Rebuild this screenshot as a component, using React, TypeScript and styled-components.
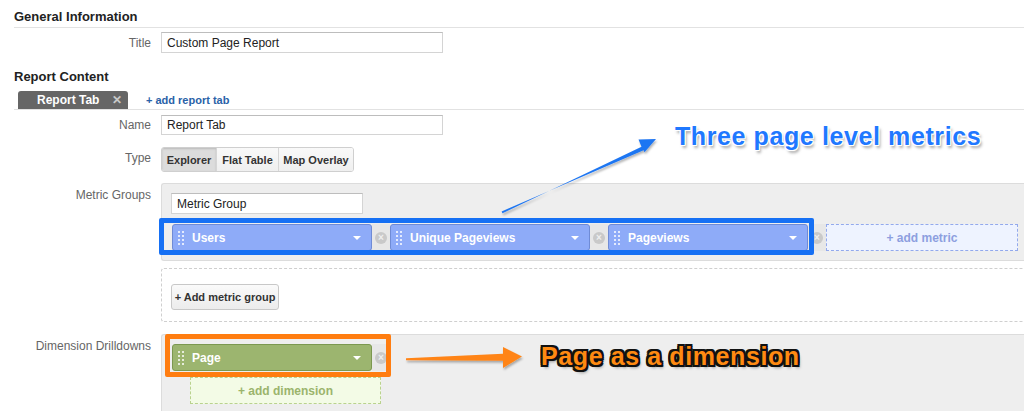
import React from 'react';
import styled, { createGlobalStyle } from 'styled-components';

const GlobalStyle = createGlobalStyle`
  html, body {
    margin: 0;
    padding: 0;
    background: #fff;
    overflow: hidden;
  }
  body {
    font-family: "Liberation Sans", Arial, sans-serif;
    color: #222;
  }
`;

const metrics = ['Users', 'Unique Pageviews', 'Pageviews'];

const Page = styled.div`
  position: relative;
  width: 1024px;
  height: 411px;
  overflow: hidden;
  padding-left: 14px;
  box-sizing: border-box;
`;

const SectionTitle = styled.h2<{ $ruled?: boolean }>`
  margin: ${(p) => (p.$ruled ? '9px' : '16px')} 0 0;
  padding-bottom: ${(p) => (p.$ruled ? '3px' : '0')};
  font-size: 13px;
  line-height: 15px;
  font-weight: bold;
  color: #222;
  border-bottom: ${(p) => (p.$ruled ? '1px solid #e2e2e2' : 'none')};
`;

const FieldRow = styled.div<{ $top: number; $center?: boolean }>`
  display: flex;
  align-items: ${(p) => (p.$center ? 'center' : 'flex-start')};
  gap: 10px;
  margin-top: ${(p) => p.$top}px;
`;

const Label = styled.div<{ $pad?: number }>`
  flex: 0 0 137px;
  text-align: right;
  font-size: 12px;
  line-height: 14px;
  color: #666;
  padding-top: ${(p) => p.$pad ?? 0}px;
`;

const TextInput = styled.div<{ $w: number; $h: number }>`
  width: ${(p) => p.$w}px;
  height: ${(p) => p.$h}px;
  box-sizing: border-box;
  border: 1px solid #d4d4d4;
  border-top-color: #bdbdbd;
  background: #fff;
  padding-left: 5px;
  display: flex;
  align-items: center;
  font-size: 12px;
  color: #222;
`;

const TabBar = styled.div`
  display: flex;
  align-items: flex-end;
  gap: 18px;
  margin-top: 7px;
  padding-left: 4px;
  border-bottom: 1px solid #e2e2e2;
`;

const Tab = styled.div`
  width: 110px;
  height: 18px;
  box-sizing: border-box;
  background: #666;
  border-radius: 3px 3px 0 0;
  color: #fff;
  font-size: 12px;
  font-weight: bold;
  display: flex;
  align-items: center;
  padding-left: 19px;
  gap: 13px;
`;

const TabClose = styled.span`
  color: #c9c9c9;
  font-size: 12px;
`;

const AddTab = styled.div`
  font-size: 11px;
  font-weight: bold;
  color: #2a62a8;
  line-height: 18px;
`;

const ButtonGroup = styled.div`
  display: flex;
  border: 1px solid #cfcfcf;
  border-radius: 3px;
  overflow: hidden;
`;

const ToggleButton = styled.div<{ $w: number; $active?: boolean }>`
  width: ${(p) => p.$w}px;
  height: 23px;
  display: flex;
  align-items: center;
  justify-content: center;
  font-size: 11px;
  font-weight: bold;
  color: #333;
  background: ${(p) => (p.$active ? '#dcdcdc' : 'linear-gradient(#f9f9f9, #efefef)')};
  box-shadow: ${(p) => (p.$active ? 'inset 0 1px 2px rgba(0,0,0,0.15)' : 'none')};
  & + & {
    border-left: 1px solid #d6d6d6;
  }
`;

const Panel = styled.div<{ $top: number; $bottom: number }>`
  flex: 1;
  box-sizing: border-box;
  background: #eeeeee;
  border: 1px solid #dcdcdc;
  border-right: none;
  border-radius: 3px 0 0 3px;
  padding: ${(p) => p.$top}px 0 ${(p) => p.$bottom}px 9px;
  margin-right: -20px;
`;

const DashedPanel = styled.div`
  flex: 1;
  box-sizing: border-box;
  border: 1px dashed #cfcfcf;
  border-right: none;
  border-radius: 3px 0 0 3px;
  padding: 15px 0 11px 9px;
  margin-right: -20px;
`;

const ChipRow = styled.div<{ $top: number }>`
  position: relative;
  display: flex;
  align-items: center;
  margin-top: ${(p) => p.$top}px;
  padding-left: 1px;
`;

const Chip = styled.div<{ $tone: 'blue' | 'green' }>`
  width: 200px;
  height: 27px;
  box-sizing: border-box;
  border-radius: 3px;
  background: ${(p) => (p.$tone === 'blue' ? '#8eabf8' : '#9cb56f')};
  border: 1px solid ${(p) => (p.$tone === 'blue' ? '#6f8bd6' : '#7c9850')};
  display: flex;
  align-items: center;
  padding: 0 10px 0 5px;
  color: #fff;
  font-size: 12px;
  font-weight: bold;
`;

const Grip = styled.span`
  display: grid;
  grid-template-columns: 2px 2px;
  grid-auto-rows: 2px;
  gap: 2px;
  margin-right: 8px;
  & > i {
    background: rgba(255, 255, 255, 0.75);
  }
`;

const ChipText = styled.span`
  flex: 1;
`;

const Caret = styled.span`
  width: 0;
  height: 0;
  border-left: 4px solid transparent;
  border-right: 4px solid transparent;
  border-top: 4px solid #fff;
`;

const RemoveSlot = styled.div`
  width: 18px;
  height: 27px;
  display: flex;
  align-items: center;
  justify-content: center;
  background: #e7e7e7;
`;

const RemoveDot = styled.span`
  width: 12px;
  height: 12px;
  border-radius: 50%;
  background: #c9c9c9;
  color: #efefef;
  font-size: 10px;
  line-height: 12px;
  text-align: center;
  font-weight: bold;
`;

const AddSlot = styled.div<{ $tone: 'blue' | 'green'; $w: number; $left?: number; $top?: number }>`
  width: ${(p) => p.$w}px;
  height: 27px;
  box-sizing: border-box;
  margin-left: ${(p) => p.$left ?? 0}px;
  margin-top: ${(p) => p.$top ?? 0}px;
  border: 1px dashed ${(p) => (p.$tone === 'blue' ? '#93a9ec' : '#b9d28e')};
  background: ${(p) => (p.$tone === 'blue' ? '#eef3ff' : '#f3fbe6')};
  color: ${(p) => (p.$tone === 'blue' ? '#8d9fe0' : '#9bb46c')};
  font-size: 12px;
  font-weight: bold;
  display: flex;
  align-items: center;
  justify-content: center;
`;

const Highlight = styled.div<{ $color: string; $l: number; $t: number; $w: number; $h: number }>`
  position: absolute;
  left: ${(p) => p.$l}px;
  top: ${(p) => p.$t}px;
  width: ${(p) => p.$w}px;
  height: ${(p) => p.$h}px;
  box-sizing: border-box;
  border: 5px solid ${(p) => p.$color};
  border-radius: 2px;
  pointer-events: none;
`;

const GroupButton = styled.div`
  width: 108px;
  height: 26px;
  box-sizing: border-box;
  border: 1px solid #c8c8c8;
  border-radius: 3px;
  background: linear-gradient(#fafafa, #ececec);
  font-size: 11px;
  font-weight: bold;
  color: #333;
  display: flex;
  align-items: center;
  justify-content: center;
`;

const Callout = styled.div<{ $fill: string; $edge: string; $x: number; $y: number; $thick?: boolean }>`
  position: absolute;
  left: ${(p) => p.$x}px;
  top: ${(p) => p.$y}px;
  font-family: "Liberation Sans", Arial, sans-serif;
  font-size: 25px;
  line-height: 29px;
  letter-spacing: 0.6px;
  font-weight: bold;
  white-space: nowrap;
  color: ${(p) => p.$fill};
  text-shadow:
    1px 0 0 ${(p) => p.$edge}, -1px 0 0 ${(p) => p.$edge},
    0 1px 0 ${(p) => p.$edge}, 0 -1px 0 ${(p) => p.$edge},
    1px 1px 0 ${(p) => p.$edge}, -1px -1px 0 ${(p) => p.$edge},
    1px -1px 0 ${(p) => p.$edge}, -1px 1px 0 ${(p) => p.$edge}
    ${(p) =>
      p.$thick
        ? `, 2px 0 0 ${p.$edge}, -2px 0 0 ${p.$edge}, 0 2px 0 ${p.$edge}, 0 -2px 0 ${p.$edge},
           2px 2px 0 ${p.$edge}, -2px -2px 0 ${p.$edge}, 2px -2px 0 ${p.$edge}, -2px 2px 0 ${p.$edge}`
        : ''},
    2px 3px 3px rgba(0, 0, 0, 0.35);
`;

const ArrowLayer = styled.svg`
  position: absolute;
  left: 0;
  top: 0;
  pointer-events: none;
`;

const MetricChip = ({ name, tone }: { name: string; tone: 'blue' | 'green' }) => (
  <>
    <Chip $tone={tone}>
      <Grip>
        {Array.from({ length: 8 }).map((_, i) => (
          <i key={i} />
        ))}
      </Grip>
      <ChipText>{name}</ChipText>
      <Caret />
    </Chip>
    <RemoveSlot>
      <RemoveDot>×</RemoveDot>
    </RemoveSlot>
  </>
);

export default function App() {
  return (
    <>
      <GlobalStyle />
      <Page>
        <SectionTitle $ruled>General Information</SectionTitle>
        <FieldRow $top={4} $center>
          <Label>Title</Label>
          <TextInput $w={282} $h={21}>Custom Page Report</TextInput>
        </FieldRow>

        <SectionTitle>Report Content</SectionTitle>
        <TabBar>
          <Tab>
            Report Tab <TabClose>✕</TabClose>
          </Tab>
          <AddTab>+ add report tab</AddTab>
        </TabBar>

        <FieldRow $top={5} $center>
          <Label>Name</Label>
          <TextInput $w={282} $h={20}>Report Tab</TextInput>
        </FieldRow>

        <FieldRow $top={12}>
          <Label $pad={4}>Type</Label>
          <ButtonGroup>
            <ToggleButton $w={54} $active>Explorer</ToggleButton>
            <ToggleButton $w={61}>Flat Table</ToggleButton>
            <ToggleButton $w={74}>Map Overlay</ToggleButton>
          </ButtonGroup>
        </FieldRow>

        <FieldRow $top={11}>
          <Label $pad={5}>Metric Groups</Label>
          <Panel $top={9} $bottom={9}>
            <TextInput $w={192} $h={21}>Metric Group</TextInput>
            <ChipRow $top={10}>
              {metrics.map((m) => (
                <MetricChip key={m} name={m} tone="blue" />
              ))}
              <AddSlot $tone="blue" $w={192}>+ add metric</AddSlot>
              <Highlight $color="#1670f4" $l={-12} $t={-6} $w={655} $h={37} />
            </ChipRow>
          </Panel>
        </FieldRow>

        <FieldRow $top={7}>
          <Label />
          <DashedPanel>
            <GroupButton>+ Add metric group</GroupButton>
          </DashedPanel>
        </FieldRow>

        <FieldRow $top={12}>
          <Label $pad={5}>Dimension Drilldowns</Label>
          <Panel $top={9} $bottom={20}>
            <ChipRow $top={0}>
              <MetricChip name="Page" tone="green" />
              <Highlight $color="#ff7d10" $l={-6} $t={-10} $w={226} $h={43} />
            </ChipRow>
            <AddSlot $tone="green" $w={191} $left={19} $top={6}>
              + add dimension
            </AddSlot>
          </Panel>
        </FieldRow>

        <ArrowLayer width={1024} height={411} viewBox="0 0 1024 411">
          <defs>
            <filter id="arrowShadow" x="-10%" y="-50%" width="130%" height="200%">
              <feDropShadow dx="1" dy="2" stdDeviation="1.2" floodColor="#000" floodOpacity="0.3" />
            </filter>
          </defs>
          <polygon
            points="502.5,213.2 641.5,146.8 638.5,139.6 656,139 644.5,152.2 643.6,150.3 501.6,211.4"
            fill="#1f76f2"
            filter="url(#arrowShadow)"
          />
          <polygon
            points="406,358.2 503,353.8 503,347 522,356.5 503,368 503,360.8 406,360.2"
            fill="#ff8418"
            filter="url(#arrowShadow)"
          />
        </ArrowLayer>
        <Callout $fill="#1f78ff" $edge="#ffffff" $x={675} $y={122}>
          Three page level metrics
        </Callout>
        <Callout $fill="#ff8a12" $edge="#111111" $x={541} $y={342} $thick>
          Page as a dimension
        </Callout>
      </Page>
    </>
  );
}
